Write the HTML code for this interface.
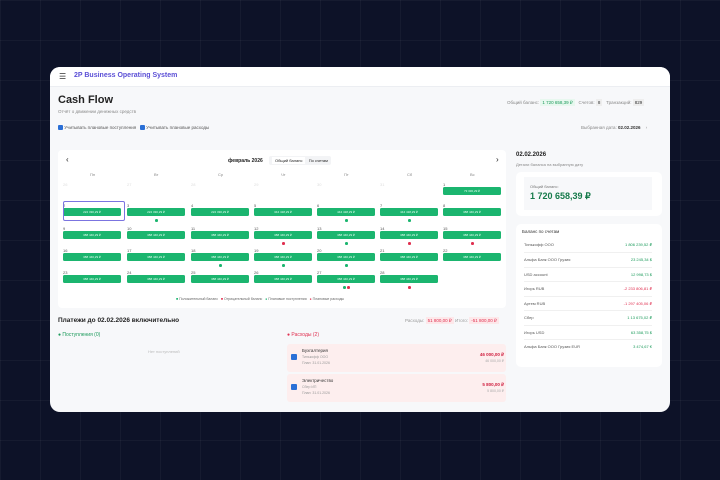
<!DOCTYPE html><html><head><meta charset="utf-8"><style>
*{box-sizing:border-box;margin:0;padding:0}
body{width:720px;height:480px;overflow:hidden;font-family:"Liberation Sans","Noto Sans CJK SC",sans-serif;background:#0d1228;position:relative;color:#222}
.grid{position:absolute;inset:0;background-image:linear-gradient(rgba(255,255,255,.04) 1px,transparent 1px),linear-gradient(90deg,rgba(255,255,255,.04) 1px,transparent 1px);background-size:40px 40px}
.card{position:absolute;left:50px;top:67px;width:620px;height:345px;background:#f7f8fa;border-radius:10px;overflow:hidden}
.top{position:absolute;left:0;top:0;width:620px;height:20px;background:#fff;border-bottom:1px solid #eceef2}
.a{position:absolute;white-space:nowrap}
.cal{position:absolute;left:8px;top:83px;width:448px;height:158px;background:#fff;border-radius:4px}
.bar{position:absolute;width:58px;height:8px;background:#1bb56f;border-radius:1.5px;color:#e6fff2;font-size:3px;text-align:center;line-height:8px}
.num{position:absolute;font-size:4px;color:#555}
.dot{position:absolute;width:2.5px;height:2.5px;border-radius:50%}
.row{position:absolute;left:8px;width:128px;font-size:4px;color:#555;border-bottom:1px solid #f0f0f0;height:14.5px;line-height:14px}
.row span{position:absolute;right:0}
</style></head><body><div class="grid"></div>
<div class="card">
<div class="top"><div class="a" style="left:9px;top:5px;font-size:8px;color:#333">&#9776;</div><div class="a" style="left:24px;top:5px;font-size:7px;font-weight:bold;color:#5b4fd6">2P Business Operating System</div></div>
<div class="a" style="left:8px;top:27px;font-size:11px;font-weight:bold;color:#222">Cash Flow</div>
<div class="a" style="left:8px;top:42px;font-size:4.5px;color:#888">Отчёт о движении денежных средств</div>
<div class="a" style="left:8px;top:58px;font-size:4.5px;color:#555"><span style="display:inline-block;width:5px;height:5px;background:#2a6fd6;border-radius:1px;vertical-align:-1px"></span> Учитывать плановые поступления &nbsp; <span style="display:inline-block;width:5px;height:5px;background:#2a6fd6;border-radius:1px;vertical-align:-1px"></span> Учитывать плановые расходы</div>
<div class="a" style="left:457px;top:33px;font-size:4.5px;color:#888">Общий баланс: <span style="background:#e8f8ef;color:#1a9a5a;padding:1px 2px">1 720 658,39 ₽</span> &nbsp; Счетов: <span style="background:#eee;color:#333;padding:1px 2px">8</span> &nbsp; Транзакций: <span style="background:#eee;color:#333;padding:1px 2px">829</span></div>
<div class="a" style="left:531px;top:58px;font-size:4.5px;color:#888">Выбранная дата: <b style="color:#333">02.02.2026</b> &nbsp;&nbsp; ›</div>
<div class="cal">
<div class="a" style="left:8px;top:5px;font-size:8px">‹</div><div class="a" style="left:438px;top:5px;font-size:8px">›</div>
<div class="a" style="left:170px;top:8px;font-size:5px;font-weight:bold">февраль 2026</div>
<div class="a" style="left:211px;top:6px;font-size:4px;background:#f3f4f6;padding:2px 3px;border-radius:2px"><span style="background:#fff;padding:1px 3px">Общий баланс</span> &nbsp; По счетам</div>
</div>
<div id="c"></div>
<div class="a" style="left:8px;top:250px;font-size:6.5px;font-weight:bold">Платежи до 02.02.2026 включительно</div>
<div class="a" style="left:355px;top:251px;font-size:4.5px;color:#999">Расходы: <span style="background:#fde8ea;color:#e03050;padding:1px 2px">51 800,00 ₽</span> Итого: <span style="background:#fde8ea;color:#e03050;padding:1px 2px">-51 800,00 ₽</span></div>
<div class="a" style="left:8px;top:265px;font-size:5px;color:#1a9a5a">● Поступления (0)</div>
<div class="a" style="left:98px;top:282px;font-size:4px;color:#bbb">Нет поступлений</div>
<div class="a" style="left:237px;top:265px;font-size:5px;color:#e03050">● Расходы (2)</div>
<div class="a" style="left:237px;top:277px;width:219px;height:28px;background:#fdeeee;border-radius:3px"></div>
<div class="a" style="left:237px;top:307px;width:219px;height:28px;background:#fdeeee;border-radius:3px"></div>
<div class="a" style="left:241px;top:287px;width:6px;height:6px;background:#2a6fd6;border-radius:1px"></div>
<div class="a" style="left:241px;top:317px;width:6px;height:6px;background:#2a6fd6;border-radius:1px"></div>
<div class="a" style="left:252px;top:281px;font-size:4.5px;line-height:5.5px;color:#333">Бухгалтерия<br><span style="color:#999;font-size:3.5px">Тинькофф ООО<br>План: 31.01.2026</span></div>
<div class="a" style="left:252px;top:311px;font-size:4.5px;line-height:5.5px;color:#333">Электричество<br><span style="color:#999;font-size:3.5px">Сбер ИП<br>План: 31.01.2026</span></div>
<div class="a" style="right:166px;top:285px;font-size:4.5px;line-height:5.5px;text-align:right;color:#d02040;font-weight:bold">46 000,00 ₽<br><span style="color:#aaa;font-size:3.5px;font-weight:normal">46 000,00 ₽</span></div>
<div class="a" style="right:166px;top:315px;font-size:4.5px;line-height:5.5px;text-align:right;color:#d02040;font-weight:bold">5 800,00 ₽<br><span style="color:#aaa;font-size:3.5px;font-weight:normal">5 800,00 ₽</span></div>
<div class="a" style="left:466px;top:85px;font-size:6px;font-weight:bold">02.02.2026</div>
<div class="a" style="left:466px;top:95px;font-size:4px;color:#888">Детали баланса на выбранную дату</div>
<div class="a" style="left:466px;top:105px;width:146px;height:44px;background:#fff;border-radius:5px"><div class="a" style="left:8px;top:5px;width:128px;height:33px;background:#f7f8fa"></div><div class="a" style="left:14px;top:12px;font-size:4px;color:#777">Общий баланс:</div><div class="a" style="left:14px;top:19px;font-size:9px;font-weight:bold;color:#157a4a">1 720 658,39 ₽</div></div>
<div class="a" style="left:466px;top:157px;width:146px;height:143px;background:#fff;border-radius:5px">
<div class="a" style="left:6px;top:5px;font-size:4.5px;color:#333">Баланс по счетам</div>
<div class="row" style="top:14px">Тинькофф ООО<span style="color:#1a9a5a">1 806 239,52 ₽</span></div>
<div class="row" style="top:29px">Альфа Банк ООО Грузия<span style="color:#1a9a5a">23 245,34 $</span></div>
<div class="row" style="top:43.5px">USD account<span style="color:#1a9a5a">12 998,73 $</span></div>
<div class="row" style="top:58px">Игорь RUB<span style="color:#e03050">-2 233 806,81 ₽</span></div>
<div class="row" style="top:72.5px">Артем RUB<span style="color:#e03050">-1 297 405,06 ₽</span></div>
<div class="row" style="top:87px">Сбер<span style="color:#1a9a5a">1 13 675,02 ₽</span></div>
<div class="row" style="top:101.5px">Игорь USD<span style="color:#1a9a5a">63 358,75 $</span></div>
<div class="row" style="top:116px;border:none">Альфа Банк ООО Грузия EUR<span style="color:#1a9a5a">3 474,67 €</span></div>
</div>
</div>
<script>
var c=document.getElementById('c'),h='';var xs=[63,127,191,254,317,380,443];var dn=['Пн','Вт','Ср','Чт','Пт','Сб','Вс'];
for(var i=0;i<7;i++){h+='<div class="num" style="left:'+(xs[i]-50+27)+'px;top:105px;color:#888">'+dn[i]+'</div>';}
for(i=0;i<6;i++)h+='<div class="num" style="left:'+(xs[i]-50)+'px;top:115px;color:#ddd">'+(26+i)+'</div>';
var ry=[115,136,159,181,203],d=1;
var vals=['89 830,29 ₽','73 330,29 ₽','222 330,29 ₽','222 330,29 ₽','222 330,29 ₽','344 418,29 ₽','444 418,29 ₽','444 418,29 ₽'];
var dots={3:'g',6:'g',7:'g',12:'r',13:'g',14:'r',15:'r',18:'g',19:'g',20:'g',27:'gr',28:'r'};
function cell(day,col,y){var x=xs[col]-50;h+='<div class="num" style="left:'+x+'px;top:'+y+'px">'+day+'</div>';h+='<div class="bar" style="left:'+x+'px;top:'+(y+5)+'px">'+(vals[day]||'388 440,29 ₽')+'</div>';var dd=dots[day];if(dd){for(var k=0;k<dd.length;k++)h+='<div class="dot" style="left:'+(x+28+(k-(dd.length-1)/2)*4)+'px;top:'+(y+16)+'px;background:'+(dd[k]=='g'?'#1bb56f':'#e03050')+'"></div>';}}
cell(1,6,115);
for(var r=1;r<5;r++)for(i=0;i<7;i++){var day=2+(r-1)*7+i;if(day>28)break;cell(day,i,ry[r]);}
h+='<div class="a" style="left:13px;top:134px;width:62px;height:20px;border:1px solid #7b74e0;border-radius:2px"></div>';
h+='<div class="a" style="left:126px;top:230px;font-size:3.5px;color:#666"><span style="color:#1bb56f">■</span> Положительный баланс &nbsp; <span style="color:#e03050">■</span> Отрицательный баланс &nbsp; <span style="color:#1bb56f">●</span> Плановые поступления &nbsp; <span style="color:#e03050">●</span> Плановые расходы</div>';
c.innerHTML=h;
</script>
</body></html>
